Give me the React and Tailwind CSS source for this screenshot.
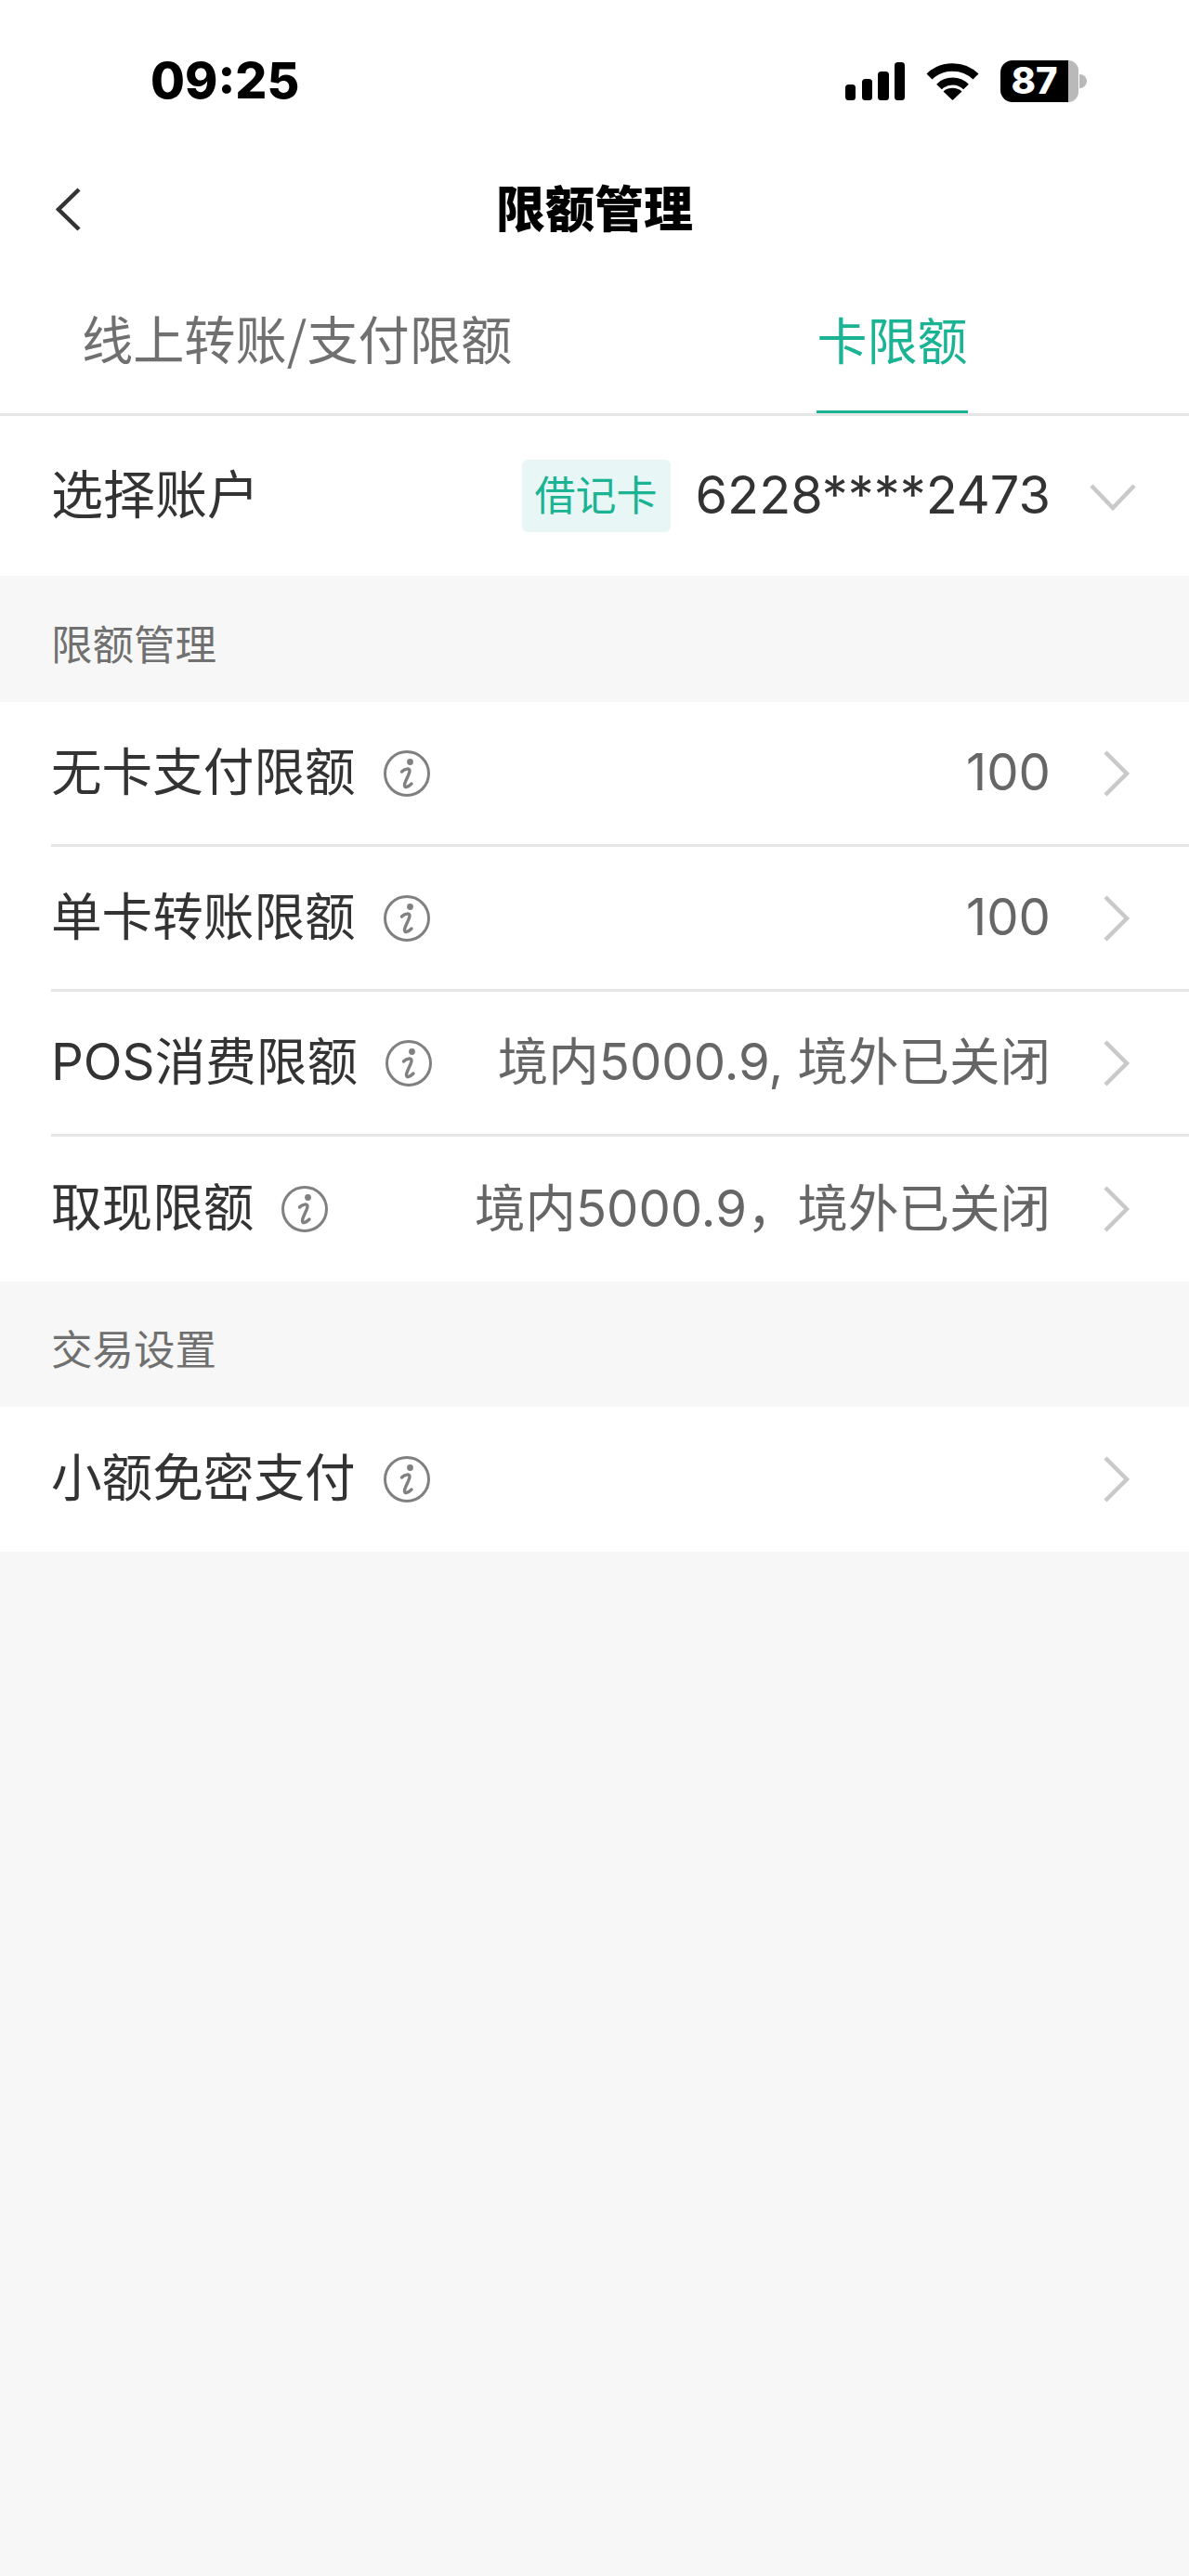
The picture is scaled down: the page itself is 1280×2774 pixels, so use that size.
const CJK = "font-['Inter','Noto_Sans_CJK_SC',sans-serif]";

function Info() {
  return (
    <svg width="52" height="52" viewBox="0 0 52 52" className="ml-[29px] shrink-0" fill="none">
      <circle cx="26" cy="26" r="23.5" stroke="#808080" strokeWidth="3" />
      <circle cx="29.5" cy="13.5" r="3.4" fill="#808080" />
      <path d="M20.5 24 C23.5 21 29.5 19.5 29 23.5 C28.5 27.5 23.5 35 23.5 38.5 C23.5 42 27.5 40.5 31 37" stroke="#808080" strokeWidth="3.4" strokeLinecap="round" />
    </svg>
  );
}

function Arrow() {
  return (
    <svg width="30" height="52" viewBox="0 0 30 52" className="shrink-0" fill="none">
      <path d="M3 3 L26 26 L3 49" stroke="#c9c9c9" strokeWidth="4.5" />
    </svg>
  );
}

function Row({ label, value, last }) {
  return (
    <div className="pl-[55px] bg-white">
      <div className={`h-[156px] flex items-center pr-[63px] ${last ? "" : "border-b-[3px] border-[#e6e6e6]"}`}>
        <span className="text-[54.6px] leading-none text-[#333333] whitespace-nowrap pb-[3px]">{label}</span>
        <Info />
        <span className="flex-1 text-right pr-[56px] text-[54.5px] leading-none text-[#666666] whitespace-nowrap pb-[2px]">{value}</span>
        <Arrow />
      </div>
    </div>
  );
}

function Section({ title, h }) {
  return (
    <div className={`flex items-center pl-[55px] pt-[14px] ${h} text-[44.5px] leading-none text-[#707070]`}>{title}</div>
  );
}

export default function App() {
  return (
    <div className={`w-[1280px] h-[2774px] bg-[#f7f7f7] ${CJK}`}>
      <div className="bg-white">
        <div className="h-[174px] flex items-center justify-between pl-[162px] pr-[110px]">
          <span className="text-[53.5px] font-extrabold leading-none text-black">09:25</span>
          <div className="flex items-center gap-[23px]">
            <svg width="64" height="41" viewBox="0 0 64 41" fill="#000">
              <rect x="0" y="24" width="11" height="17" rx="3.5" />
              <rect x="18" y="18" width="11" height="23" rx="3.5" />
              <rect x="35" y="10" width="12" height="31" rx="3.5" />
              <rect x="53" y="0" width="11" height="41" rx="3.5" />
            </svg>
            <svg width="57" height="41" viewBox="0 0 57 41" fill="none">
              <path d="M3.5 15.5 C17 2 40 2 53.5 15.5" stroke="#000" strokeWidth="8.5" />
              <path d="M14 26.5 C22 18.5 35 18.5 43 26.5" stroke="#000" strokeWidth="8" />
              <path d="M28.5 41 L18.5 31.5 C24 26.5 33 26.5 38.5 31.5 Z" fill="#000" />
            </svg>
            <div className="flex items-center">
              <div className="w-[73px] h-[45px] rounded-l-[13px] bg-black flex items-center justify-center text-white text-[40px] font-extrabold leading-none">87</div>
              <div className="w-[11px] h-[45px] rounded-r-[13px] bg-[#b9b9b9]" />
              <div className="w-[8px] h-[15px] rounded-r-full bg-[#b9b9b9] ml-px" />
            </div>
          </div>
        </div>

        <div className="h-[102px] grid grid-cols-[1fr_auto_1fr] items-center pl-[60px]">
          <svg width="28" height="47" viewBox="0 0 28 47" fill="none">
            <path d="M25 2 L3 23.5 L25 45" stroke="#333333" strokeWidth="4.5" />
          </svg>
          <span className="text-[53px] font-black leading-none text-black -translate-x-[30px] pt-[2px]">限额管理</span>
          <span />
        </div>

        <div className="h-[172px] flex items-end justify-between pl-[88px] pr-[238px] border-b-[3px] border-[#e6e6e6]">
          <div className="h-[142px] flex items-center text-[55.2px] leading-none text-[#707070] whitespace-nowrap font-['Noto_Sans_CJK_SC',sans-serif] pb-[21px]">线上转账/支付限额</div>
          <div className="h-[142px] w-[163px] flex items-center justify-center text-[54px] leading-none text-[#1ab394] border-b-[3px] border-[#1ab394] pb-[8px]">卡限额</div>
        </div>

        <div className="h-[172px] flex items-center pl-[55px] pr-[57px]">
          <span className="text-[56px] leading-none text-[#333333] pb-[2px]">选择账户</span>
          <div className="ml-auto w-[160px] h-[78px] rounded-[6px] bg-[#e8f7f5] flex items-center justify-center text-[44px] leading-none text-[#1ab394]">借记卡</div>
          <span className="ml-[27px] text-[55.8px] leading-none text-[#333333] whitespace-nowrap pb-[2px]">6228****2473</span>
          <svg width="50" height="30" viewBox="0 0 50 30" className="ml-[42px] mt-[2px]" fill="none">
            <path d="M2 3 L25 27 L48 3" stroke="#c9c9c9" strokeWidth="4.5" />
          </svg>
        </div>
      </div>

      <Section title="限额管理" h="h-[136px]" />
      <Row label="无卡支付限额" value="100" />
      <Row label="单卡转账限额" value="100" />
      <Row label="POS消费限额" value="境内5000.9, 境外已关闭" />
      <Row label="取现限额" value="境内5000.9，境外已关闭" last />
      <Section title="交易设置" h="h-[135px]" />
      <Row label="小额免密支付" value="" last />
    </div>
  );
}
